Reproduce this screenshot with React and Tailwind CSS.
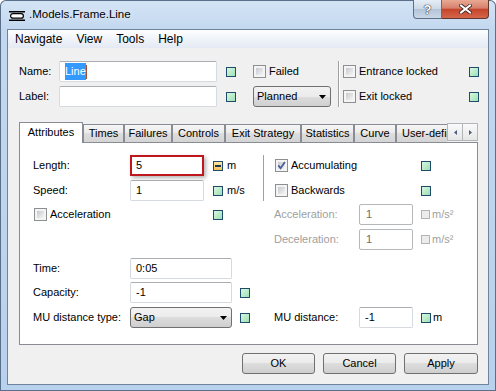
import React from "react";

// status indicator squares
function Ind({ className = "" }) {
  return (
    <div
      className={`w-[10px] h-[10px] shrink-0 border border-[#1f4c6b] bg-linear-to-br from-[#d6f7e1] to-[#9fe0b4] ${className}`}
    />
  );
}

function MinusInd({ className = "" }) {
  return (
    <div
      className={`w-[10px] h-[10px] shrink-0 border border-[#1f4c6b] bg-linear-to-b from-[#fde7a6] to-[#f2c25a] flex items-center justify-center ${className}`}
    >
      <div className="w-[6px] h-[2px] bg-[#1f3550]" />
    </div>
  );
}

function OffInd({ className = "" }) {
  return <div className={`w-[9px] h-[9px] shrink-0 border border-[#b4b4b4] bg-[#ececec] ${className}`} />;
}

function Check({ checked = false, className = "" }) {
  return (
    <div className={`relative w-[13px] h-[13px] shrink-0 border border-[#8e8f8f] bg-[#f4f4f4] p-[2px] ${className}`}>
      <div className="w-full h-full bg-linear-to-br from-[#c6c9ce] to-[#f5f5f5]" />
      {checked && (
        <svg className="absolute left-0 top-0" width="11" height="11" viewBox="0 0 11 11">
          <path d="M2.3 5.4 L4.6 8.2 L8.9 2" fill="none" stroke="#4a5f9c" strokeWidth="1.8" />
        </svg>
      )}
    </div>
  );
}

function Field({ className = "", children }) {
  return (
    <div
      className={`h-[21px] shrink-0 flex items-center pl-[5px] bg-white border border-[#d5d9e0] border-t-[#abadb3] rounded-[2px] ${className}`}
    >
      {children}
    </div>
  );
}

function OffField({ children }) {
  return (
    <div className="h-[21px] w-[54px] shrink-0 flex items-center pl-[6px] bg-white border border-[#b5b8bb] rounded-[2px] text-[#6d6d6d]">
      {children}
    </div>
  );
}

function Combo({ className = "", children }) {
  return (
    <div
      className={`h-[21px] shrink-0 flex items-center justify-between pl-[3px] pr-[4px] rounded-[3px] border border-[#707070] bg-[linear-gradient(#f2f2f2,#ebebeb_50%,#dddddd_50%,#cfcfcf)] ${className}`}
    >
      <span>{children}</span>
      <svg width="7" height="4" viewBox="0 0 7 4">
        <path d="M0 0H7L3.5 4Z" fill="#000" />
      </svg>
    </div>
  );
}

function Btn({ className = "", children }) {
  return (
    <div
      className={`h-[21px] flex items-center justify-center rounded-[3px] border border-[#707070] bg-[linear-gradient(#f2f2f2,#ebebeb_50%,#dddddd_50%,#cfcfcf)] ${className}`}
    >
      {children}
    </div>
  );
}

const tabs = [
  ["Times", "w-[41px]"],
  ["Failures", "w-[48px]"],
  ["Controls", "w-[53px]"],
  ["Exit Strategy", "w-[76px]"],
  ["Statistics", "w-[53px]"],
  ["Curve", "w-[42px]"],
];

const tabBg = "bg-[linear-gradient(#f6f6f6,#e9e9e9_50%,#dedede_50%,#d4d4d4)]";

export default function App() {
  return (
    <div className="w-[496px] h-[391px] overflow-hidden flex flex-col rounded-t-[6px] bg-[linear-gradient(180deg,#d4e4f5_0px,#c3d8ef_29px,#b8d1ec_100%)] shadow-[inset_0_0_0_1px_#5a6f8a] font-['Liberation_Sans',Arial,sans-serif] text-[11px] text-black">
      {/* title bar */}
      <div className="h-[29px] flex shrink-0">
        <div className="flex-1 flex items-center pl-[9px]">
          <svg className="mt-[2px]" width="16" height="10" viewBox="0 0 16 10">
            <rect x="0" y="0" width="16" height="1.5" fill="#000" />
            <rect x="1.6" y="2.6" width="12.8" height="4.6" rx="2.3" fill="#fff" stroke="#000" strokeWidth="1.2" />
            <rect x="0" y="8.5" width="16" height="1.5" fill="#000" />
          </svg>
          <span className="ml-[4px] text-[11.5px] [text-shadow:0_0_6px_rgba(255,255,255,0.9)]">.Models.Frame.Line</span>
        </div>
        <div className="flex self-start mr-[7px]">
          <div className="w-[29px] h-[19px] rounded-bl-[4px] border border-t-0 border-[#5d6f86] bg-[linear-gradient(#e6edf5,#cdd9e6_50%,#b3c4d8_50%,#c9d7e7)] flex items-center justify-center">
            <span className="font-bold text-[13px] leading-none text-white [text-shadow:0_0_1px_#2d3440,0_0_1px_#2d3440,0_0_1px_#2d3440]">?</span>
          </div>
          <div className="w-[47px] h-[19px] rounded-br-[4px] border border-t-0 border-l-0 border-[#5e3930] bg-[linear-gradient(#eaa994,#d6806a_45%,#c5452b_52%,#d4664a)] flex items-center justify-center">
            <svg width="13" height="10" viewBox="0 0 13 10">
              <path d="M2 1.5L11 8.5M11 1.5L2 8.5" stroke="#3b2424" strokeWidth="3.6" strokeLinecap="square" />
              <path d="M2 1.5L11 8.5M11 1.5L2 8.5" stroke="#fff" strokeWidth="2" strokeLinecap="square" />
            </svg>
          </div>
        </div>
      </div>

      {/* client */}
      <div className="mx-[7px] h-[356px] shrink-0 border border-[#70839d] flex flex-col bg-[#f0f0f0]">
        {/* menu */}
        <div className="h-[18px] shrink-0 flex items-center text-[12px] bg-[linear-gradient(#fdfeff,#e3e9f3)]">
          <span className="px-[7px]">Navigate</span>
          <span className="px-[7px]">View</span>
          <span className="px-[7px]">Tools</span>
          <span className="px-[7px]">Help</span>
        </div>

        {/* name / label */}
        <div className="flex mt-[13px] pl-[11px] shrink-0">
          <div className="flex flex-col gap-[4px] w-[40px]">
            <div className="h-[21px] flex items-center">Name:</div>
            <div className="h-[21px] flex items-center">Label:</div>
          </div>
          <div className="flex flex-col gap-[4px]">
            <Field className="w-[158px]">
              <span className="bg-[#3399ff] text-white">Line</span>
              <span className="w-px h-[14px] bg-[#a0522d]" />
            </Field>
            <Field className="w-[158px]" />
          </div>
          <div className="flex flex-col gap-[4px] ml-[9px]">
            <div className="h-[21px] flex items-center">
              <Ind />
            </div>
            <div className="h-[21px] flex items-center">
              <Ind />
            </div>
          </div>
          <div className="flex flex-col gap-[4px] ml-[17px]">
            <div className="h-[21px] flex items-center">
              <Check />
              <span className="ml-[3px]">Failed</span>
            </div>
            <Combo className="w-[78px]">Planned</Combo>
          </div>
          <div className="ml-[7px] w-[2px] border-l border-[#a0a0a0] bg-white" />
          <div className="flex flex-col gap-[4px] ml-[3px]">
            <div className="h-[21px] flex items-center">
              <Check />
              <span className="ml-[3px] w-[110px]">Entrance locked</span>
              <Ind />
            </div>
            <div className="h-[21px] flex items-center">
              <Check />
              <span className="ml-[3px] w-[110px]">Exit locked</span>
              <Ind />
            </div>
          </div>
        </div>

        {/* tabs */}
        <div className="flex items-end h-[20px] mt-[15px] ml-[11px] w-[460px] shrink-0">
          <div className="relative z-10 h-[21px] -mb-px w-[64px] shrink-0 bg-white border border-b-0 border-[#898c95] flex items-center justify-center pb-[1px]">
            Attributes
          </div>
          {tabs.map(([label, w]) => (
            <div
              key={label}
              className={`h-[18px] ${w} shrink-0 border border-b-0 border-[#898c95] ${tabBg} flex items-center justify-center whitespace-nowrap`}
            >
              {label}
            </div>
          ))}
          <div className={`h-[18px] w-[51px] shrink-0 border border-b-0 border-r-0 border-[#898c95] ${tabBg} flex items-center pl-[5px] overflow-hidden whitespace-nowrap`}>
            User-defined
          </div>
          <div className="flex mb-[1px] shrink-0">
            <div className="w-[16px] h-[18px] border border-[#b3b6bb] bg-[linear-gradient(#fafafa,#e6e6e6)] flex items-center justify-center">
              <svg width="3" height="5" viewBox="0 0 3 5">
                <path d="M3 0V5L0 2.5Z" fill="#4d5d80" />
              </svg>
            </div>
            <div className="w-[15px] h-[18px] border border-l-0 border-[#b3b6bb] bg-[linear-gradient(#fafafa,#e6e6e6)] flex items-center justify-center">
              <svg width="3" height="5" viewBox="0 0 3 5">
                <path d="M0 0V5L3 2.5Z" fill="#4d5d80" />
              </svg>
            </div>
          </div>
        </div>

        {/* tab page */}
        <div className="w-[459px] h-[203px] ml-[11px] shrink-0 border border-[#898c95] bg-white flex flex-col">
          {/* length / speed */}
          <div className="flex pt-[12px]">
            <div className="w-[243px] flex flex-col gap-[4px]">
              <div className="h-[21px] flex items-center pl-[13px]">
                <div className="w-[97px] shrink-0">Length:</div>
                <div className="h-[21px] w-[74px] shrink-0 flex items-center pl-[4px] bg-white border-2 border-[#c0161d] shadow-[2px_2px_4px_rgba(0,0,0,0.3)]">
                  5
                </div>
                <MinusInd className="ml-[9px]" />
                <span className="ml-[4px]">m</span>
              </div>
              <div className="h-[21px] flex items-center pl-[13px]">
                <div className="w-[97px] shrink-0">Speed:</div>
                <Field className="w-[74px]">1</Field>
                <Ind className="ml-[9px]" />
                <span className="ml-[4px]">m/s</span>
              </div>
            </div>
            <div className="w-px bg-[#a0a0a0]" />
            <div className="flex flex-col gap-[4px] pl-[11px]">
              <div className="h-[21px] flex items-center">
                <Check checked />
                <span className="ml-[3px] w-[130px]">Accumulating</span>
                <Ind />
              </div>
              <div className="h-[21px] flex items-center">
                <Check />
                <span className="ml-[3px] w-[130px]">Backwards</span>
                <Ind />
              </div>
            </div>
          </div>

          {/* acceleration / deceleration */}
          <div className="flex mt-[3px]">
            <div className="w-[244px] h-[21px] flex items-center pl-[14px]">
              <Check />
              <span className="ml-[3px] w-[163px]">Acceleration</span>
              <Ind />
            </div>
            <div className="flex flex-col gap-[4px] pl-[10px] text-[#a0a0a0]">
              <div className="h-[21px] flex items-center">
                <div className="w-[85px] shrink-0">Acceleration:</div>
                <OffField>1</OffField>
                <OffInd className="ml-[8px]" />
                <span className="ml-[2px]">m/s²</span>
              </div>
              <div className="h-[21px] flex items-center">
                <div className="w-[85px] shrink-0">Deceleration:</div>
                <OffField>1</OffField>
                <OffInd className="ml-[8px]" />
                <span className="ml-[2px]">m/s²</span>
              </div>
            </div>
          </div>

          {/* time / capacity / mu */}
          <div className="h-[21px] mt-[8px] flex items-center pl-[13px]">
            <div className="w-[97px] shrink-0">Time:</div>
            <Field className="w-[102px]">0:05</Field>
          </div>
          <div className="h-[21px] mt-[3px] flex items-center pl-[13px]">
            <div className="w-[97px] shrink-0">Capacity:</div>
            <Field className="w-[102px]">-1</Field>
            <Ind className="ml-[8px]" />
          </div>
          <div className="h-[21px] mt-[4px] flex items-center pl-[13px]">
            <div className="w-[97px] shrink-0">MU distance type:</div>
            <Combo className="w-[102px]">Gap</Combo>
            <Ind className="ml-[8px]" />
            <div className="ml-[24px] w-[85px] shrink-0">MU distance:</div>
            <Field className="w-[54px]">-1</Field>
            <Ind className="ml-[8px]" />
            <span className="ml-[2px]">m</span>
          </div>
        </div>

        {/* buttons */}
        <div className="flex justify-end gap-[8px] pr-[10px] mt-[8px]">
          <Btn className="w-[73px]">OK</Btn>
          <Btn className="w-[73px]">Cancel</Btn>
          <Btn className="w-[74px]">Apply</Btn>
        </div>
      </div>
    </div>
  );
}
